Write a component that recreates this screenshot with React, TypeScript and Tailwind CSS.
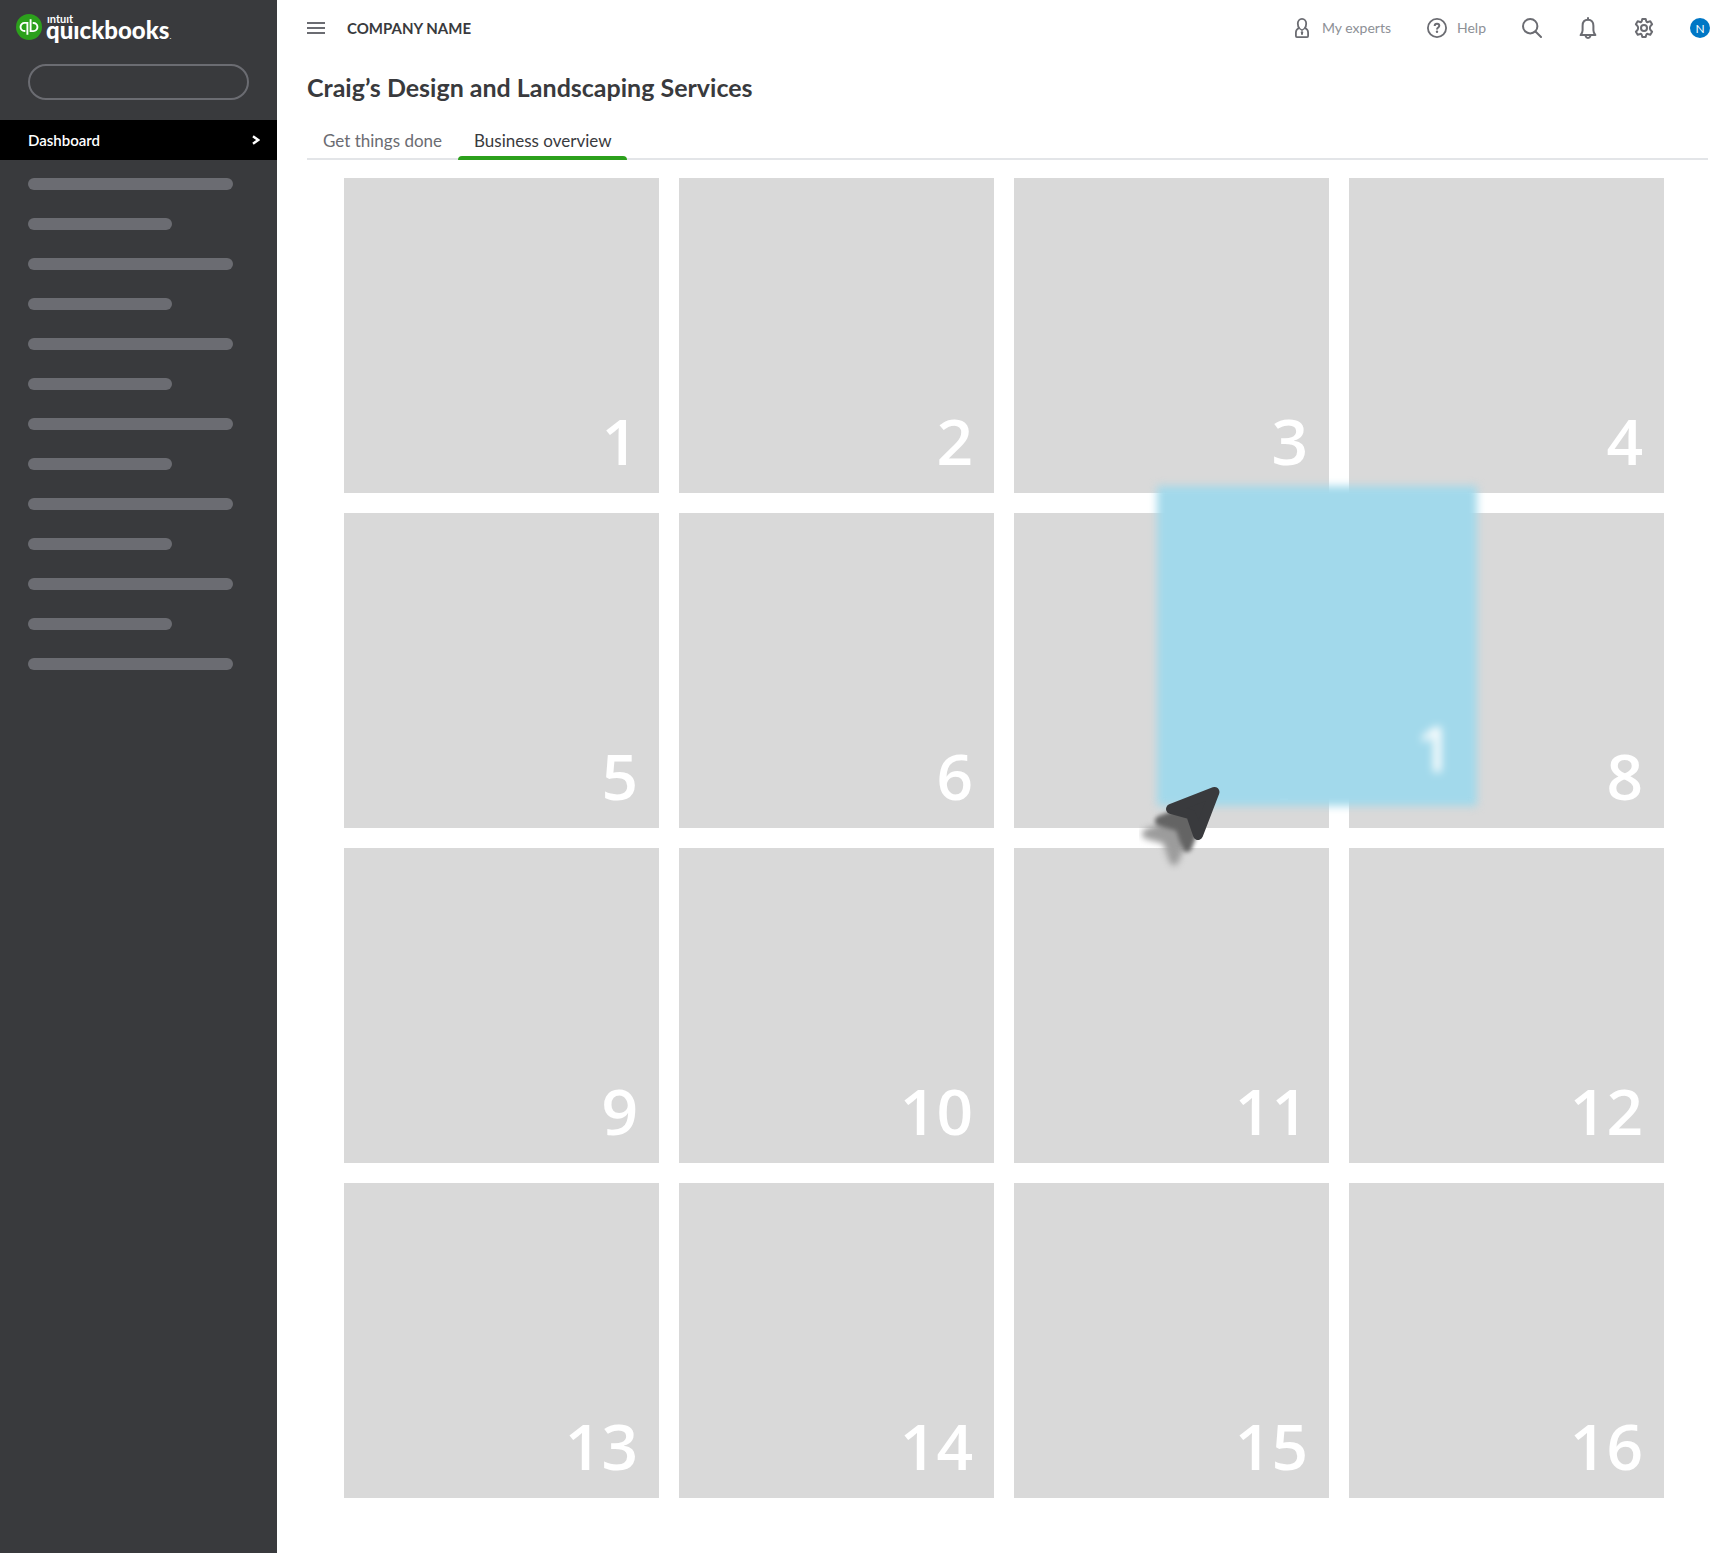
import React from "react";

const TILES = Array.from({ length: 16 }, (_, i) => i + 1);
const NAV_ROWS = Array.from({ length: 13 }, (_, i) => i);

function BrandMark() {
  return (
    <svg viewBox="0 0 26 26" className="size-[26px] shrink-0" aria-hidden="true">
      <circle cx="13" cy="13" r="13" fill="#2ca01c" />
      <g fill="none" stroke="#fff" strokeWidth="1.9">
        <path d="M11.4 20.8V8.9H8.6a4 4 0 0 0 0 8.1h.7" />
        <path d="M14.6 5.2V17.1h2.8a4 4 0 0 0 0-8.1h-.7" />
      </g>
    </svg>
  );
}

function ExpertIcon() {
  return (
    <svg viewBox="0 0 20 20" className="size-5" fill="none" stroke="#6b6c72" strokeWidth="1.8" strokeLinejoin="round" aria-hidden="true">
      <path d="M7.400 10.500C6.200 9.300 5.800 7.500 5.800 5.600 5.800 2.900 7.500.9 10 .9s4.200 2 4.200 4.700c0 1.900-.4 3.700-1.600 4.900" />
      <path d="M7.300 10.100c-2.500.7-3.400 2.200-3.400 4.600v3.400c0 .6.400 1 1 1h10.200c.6 0 1-.4 1-1v-3.400c0-2.400-.9-3.900-3.400-4.600" />
      <path d="M7.200 10.200 10 12.200l2.800-2" strokeWidth="1.400" />
      <path d="M10 13.400v3.400" strokeWidth="2" />
      <path d="M8.800 14.400h2.400" strokeWidth="1.400" />
    </svg>
  );
}

function HelpIcon() {
  return (
    <svg viewBox="0 0 20 20" className="size-5" fill="none" stroke="#6b6c72" strokeWidth="1.8" aria-hidden="true">
      <circle cx="10" cy="10" r="9.100" />
      <path d="M7.700 7.900c0-1.400 1-2.200 2.300-2.200s2.300.8 2.300 2.100c0 1.700-2.300 1.700-2.300 3.600" strokeWidth="2" />
      <circle cx="10" cy="13.800" r="1.200" fill="#6b6c72" stroke="none" />
    </svg>
  );
}

function SearchIcon() {
  return (
    <svg viewBox="0 0 20 20" className="size-5" fill="none" stroke="#6b6c72" strokeWidth="2" strokeLinecap="round" aria-hidden="true">
      <circle cx="8.200" cy="8.200" r="7.200" />
      <path d="m13.500 13.500 5.500 5.500" />
    </svg>
  );
}

function BellIcon() {
  return (
    <svg viewBox="0 0 20 22" className="h-[22px] w-5" fill="none" stroke="#6b6c72" strokeWidth="2" strokeLinecap="round" strokeLinejoin="round" aria-hidden="true">
      <path d="M10 1v1.600" />
      <path d="M10 2.700c-3.600 0-5.400 2.600-5.400 6v4.500c0 1.700-.7 3.300-2 4.900h14.800c-1.300-1.600-2-3.200-2-4.900V8.700c0-3.400-1.800-6-5.400-6Z" />
      <path d="M7.700 19.300c.3 1.100 1.200 1.700 2.300 1.700s2-.6 2.300-1.700" />
    </svg>
  );
}

function GearIcon() {
  return (
    <svg viewBox="0 0 20 20" className="size-5" fill="none" stroke="#6b6c72" strokeWidth="2" strokeLinejoin="round" aria-hidden="true">
      <circle cx="10" cy="10" r="3" />
      <path d="M8.300 1h3.400l.6 2.200c.2.600 1 1 1.600.8l2.400-.7 1.800 3-1.600 1.700c-.8.800-.8 3.200 0 4l1.600 1.700-1.800 3-2.400-.7c-.6-.2-1.400.2-1.600.8l-.6 2.200H8.300l-.6-2.200c-.2-.6-1-1-1.600-.8l-2.400.7-1.800-3L3.500 12c.8-.8.8-3.200 0-4L1.900 6.300l1.800-3 2.400.7c.6.2 1.400-.2 1.600-.8Z" />
    </svg>
  );
}

function DragCursor() {
  const arrow = "M75.500 12 32 29l20 5.500L59 55Z";
  return (
    <svg viewBox="0 0 90 100" className="absolute top-[294px] -left-[18px] h-[100px] w-[90px]" strokeWidth="10" strokeLinejoin="round" aria-hidden="true">
      <g fill="#9c9c9c" stroke="#9c9c9c" className="blur-[3px]">
        <path d={arrow} transform="translate(-24 25)" />
      </g>
      <g fill="#646464" stroke="#646464" className="blur-[2px]">
        <path d={arrow} transform="translate(-11 12)" />
      </g>
      <path d={arrow} fill="#393a3d" stroke="#393a3d" />
    </svg>
  );
}

function Sidebar() {
  return (
    <aside className="w-[277px] shrink-0 bg-[#393a3d]">
      <a href="#home" aria-label="Intuit QuickBooks" className="flex h-16 items-start pt-[14px] pl-4 text-white">
        <BrandMark />
        <span className="ml-1 flex flex-col">
          <span className="h-1 pl-px text-[11px] leading-[10px] font-bold">ıntuıt</span>
          <span className="text-2xl leading-[24px] font-black">
            quıckbooks<span className="text-[8px] font-normal">.</span>
          </span>
        </span>
      </a>
      <div className="px-7">
        <input
          type="search"
          aria-label="Search"
          className="block h-9 w-full rounded-full border-2 border-[#6b6c72] bg-transparent px-4 text-white outline-none"
        />
      </div>
      <nav className="mt-5">
        <a href="#dashboard" className="flex h-10 items-center justify-between bg-black pr-[17px] pl-7 text-[15px] font-semibold text-white">
          Dashboard
          <svg viewBox="0 0 8 10" className="h-[10px] w-2" fill="none" stroke="#fff" strokeWidth="2.400" aria-hidden="true">
            <path d="m1 1.200 5.200 3.800L1 8.800" />
          </svg>
        </a>
        <ul className="flex flex-col gap-7 pt-[18px] pl-7">
          {NAV_ROWS.map((i) => (
            <li key={i} className={`h-3 rounded-full bg-[#6b6c72] ${i % 2 === 0 ? "w-[205px]" : "w-36"}`} />
          ))}
        </ul>
      </nav>
    </aside>
  );
}

function TopBar() {
  return (
    <header className="flex h-14 items-center pr-[18px] pl-[30px]">
      <button type="button" aria-label="Toggle menu" className="flex flex-col gap-[3px]">
        <span className="h-0.5 w-[18px] bg-[#6b6c72]" />
        <span className="h-0.5 w-[18px] bg-[#6b6c72]" />
        <span className="h-0.5 w-[18px] bg-[#6b6c72]" />
      </button>
      <span className="ml-[22px] text-[15px] font-bold text-[#393a3d]">COMPANY NAME</span>
      <div className="ml-auto flex items-center gap-9 text-sm text-[#8d9096]">
        <button type="button" className="flex items-center gap-2.5">
          <ExpertIcon />
          My experts
        </button>
        <button type="button" className="flex items-center gap-2.5">
          <HelpIcon />
          Help
        </button>
        <button type="button" aria-label="Search"><SearchIcon /></button>
        <button type="button" aria-label="Notifications"><BellIcon /></button>
        <button type="button" aria-label="Settings"><GearIcon /></button>
        <button type="button" aria-label="Account" className="flex size-5 items-center justify-center rounded-full bg-[#0077c5] pt-px text-xs leading-5 text-white">
          N
        </button>
      </div>
    </header>
  );
}

function Tile({ value }: { value: number }) {
  return (
    <li className={`relative flex aspect-square items-end justify-end bg-[#d9d9d9] pr-[21px] pb-5 font-['Open_Sans','Noto_Sans',sans-serif] text-[64px] leading-[64px] font-semibold text-white ${value === 7 ? "z-10" : ""}`}>
      {value}
      {value === 7 && (
        <div className="absolute -top-[27px] left-[143px] size-80">
          <div className="flex size-80 items-end justify-end bg-[#a2d9eb] pr-6 pb-[26px] blur-[4px]">1</div>
          <DragCursor />
        </div>
      )}
    </li>
  );
}

export default function App() {
  return (
    <div className="flex min-h-screen bg-white font-['Lato','Open_Sans',sans-serif]">
      <Sidebar />
      <div className="min-w-0 flex-1">
        <TopBar />
        <main className="pr-5 pb-[55px] pl-[30px]">
          <h1 className="pt-[15px] text-[25px] leading-8 font-bold text-[#393a3d]">Craig’s Design and Landscaping Services</h1>
          <div role="tablist" className="mt-[17px] flex h-10 border-b-2 border-[#e3e5e8]">
            <button type="button" role="tab" aria-selected="false" className="h-10 px-4 pt-0.5 text-[17px] text-[#6b6c72]">
              Get things done
            </button>
            <button type="button" role="tab" aria-selected="true" className="relative h-10 px-4 pt-0.5 text-[17px] text-[#393a3d]">
              Business overview
              <span className="absolute inset-x-0 bottom-0 h-1 rounded-t-sm bg-[#2ca01c]" />
            </button>
          </div>
          <ul className="mt-[18px] mr-11 ml-[37px] grid grid-cols-4 gap-5">
            {TILES.map((n) => (
              <Tile key={n} value={n} />
            ))}
          </ul>
        </main>
      </div>
    </div>
  );
}
